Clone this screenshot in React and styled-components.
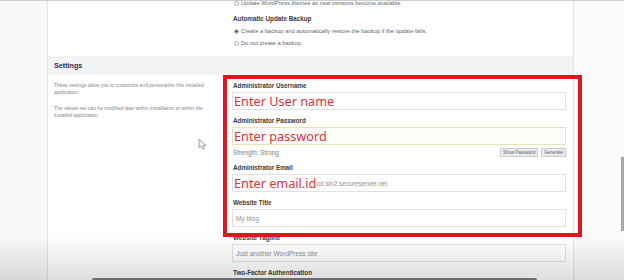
import React from 'react';
import styled, { createGlobalStyle } from 'styled-components';

const RED = '#e3141d';

const GlobalStyle = createGlobalStyle`
  html, body {
    margin: 0;
    padding: 0;
  }
  body {
    width: 624px;
    height: 280px;
    overflow: hidden;
    font-family: "Liberation Sans", Arial, sans-serif;
  }
`;

const Screen = styled.div`
  position: relative;
  width: 624px;
  height: 280px;
  box-sizing: border-box;
  border-top: 1px solid #cfcfcf;
  background: #f8f8f8;
  display: flex;
  overflow: hidden;
`;

const Panel = styled.div`
  margin-left: 47px;
  width: 527px;
  box-sizing: border-box;
  border-left: 1px solid #e4e4e4;
  border-right: 1px solid #e4e4e4;
  background: #fff;
  display: flex;
  flex-direction: column;
`;

const Gutter = styled.div`
  flex: 1;
  display: flex;
  flex-direction: column;
  align-items: flex-end;
  background: #fbfbfb;
`;

const ScrollThumb = styled.div`
  margin-top: 156px;
  width: 3px;
  height: 74px;
  background: #a9a9a9;
`;

const TopSection = styled.div`
  height: 55px;
  display: grid;
  grid-template-columns: 175px 1fr;
  overflow: hidden;
`;

const TopOptions = styled.div`
  grid-column: 2;
  padding-left: 10px;
  display: flex;
  flex-direction: column;
`;

const OptionHeading = styled.div`
  margin-top: 8px;
  font-size: 6.3px;
  line-height: 8px;
  font-weight: bold;
  color: #3a3a3a;
`;

const Option = styled.div`
  display: flex;
  align-items: center;
  gap: 2px;
  padding-left: 1px;
  height: 8px;
  margin-top: ${p => (p.first ? '-2px' : '4px')};
  font-size: 5.8px;
  color: #666;
  white-space: nowrap;
`;

const Radio = styled.span`
  width: 5px;
  height: 5px;
  box-sizing: border-box;
  border-radius: 50%;
  border: 1px solid #b0b0b0;
  background: ${p => (p.checked ? 'radial-gradient(circle, #555 0 1.2px, #fff 1.3px)' : '#fff')};
  flex-shrink: 0;
`;

const SectionBand = styled.div`
  height: 19px;
  padding-left: 6px;
  background: #f2f3f5;
  font-size: 7.2px;
  line-height: 19px;
  font-weight: bold;
  color: #2a2b55;
`;

const SectionBody = styled.div`
  flex: 1;
  display: grid;
  grid-template-columns: 175px 1fr;
`;

const Description = styled.div`
  padding: 6.5px 14px 0 6px;
`;

const DescText = styled.p`
  margin: 0 0 9px;
  font-size: 5px;
  line-height: 7px;
  color: #888;
`;

const FormColumn = styled.div`
  position: relative;
  padding: 7px 7px 0 9px;
  display: flex;
  flex-direction: column;
  gap: 7px;
`;

const Field = styled.div`
  display: flex;
  flex-direction: column;
`;

const Label = styled.div`
  padding-left: 1px;
  font-size: 6.3px;
  line-height: 8px;
  font-weight: bold;
  color: #3a3a3a;
  white-space: nowrap;
`;

const Input = styled.div`
  margin-top: 2px;
  height: 18px;
  box-sizing: border-box;
  border: 1px solid ${p => (p.focused ? '#ece3b4' : '#e1e1e1')};
  background: ${p => (p.focused ? '#fffefa' : '#fff')};
  display: flex;
  align-items: center;
  padding-left: 3px;
  font-size: 6.5px;
  color: #8f8f8f;
  white-space: nowrap;
  overflow: hidden;
`;

const RedNote = styled.span`
  margin-left: -2px;
  font-family: "Noto Sans", "Open Sans", sans-serif;
  font-size: 12.7px;
  line-height: 1;
  color: #e2303a;
`;

const StrengthRow = styled.div`
  margin-top: 3px;
  height: 9px;
  display: flex;
  align-items: center;
  justify-content: space-between;
`;

const Strength = styled.span`
  padding-left: 1px;
  font-size: 6.3px;
  color: #808080;
`;

const ButtonGroup = styled.div`
  display: flex;
  gap: 3px;
`;

const SmallButton = styled.span`
  height: 9px;
  box-sizing: border-box;
  padding: 0 2px;
  border: 1px solid #cbcbcb;
  background: #ececec;
  font-size: 4.5px;
  line-height: 7px;
  color: #606060;
`;

const Annotation = styled.div`
  position: absolute;
  top: 0;
  left: 0;
  width: 359px;
  height: 162px;
  box-sizing: border-box;
  border: 4px solid ${RED};
  pointer-events: none;
`;

const Cursor = styled.svg`
  position: absolute;
  left: 198px;
  top: 137px;
`;

const BottomShade = styled.div`
  position: absolute;
  left: 0;
  right: 0;
  bottom: 0;
  height: 44px;
  background: linear-gradient(to bottom, rgba(0, 0, 0, 0), rgba(0, 0, 0, 0.13));
  pointer-events: none;
`;

const CaptionEdge = styled.div`
  position: absolute;
  left: 92px;
  bottom: 0;
  width: 445px;
  height: 2px;
  border-radius: 2px 2px 0 0;
  background: rgba(70, 70, 70, 0.75);
`;

const fields = [
  { label: 'Administrator Username', note: 'Enter User name' },
  { label: 'Administrator Password', note: 'Enter password', focused: true, password: true },
  { label: 'Administrator Email', note: 'Enter email.id', value: 'od.sin2.secureserver.net' },
  { label: 'Website Title', value: 'My blog' },
  { label: 'Website Tagline', value: 'Just another WordPress site' },
  { label: 'Two-Factor Authentication' },
];

const App = () => (
  <>
    <GlobalStyle />
    <Screen>
      <Panel>
        <TopSection>
          <TopOptions>
            <Option first>
              <Radio />
              Update WordPress themes as new versions become available.
            </Option>
            <OptionHeading>Automatic Update Backup</OptionHeading>
            <Option>
              <Radio checked />
              Create a backup and automatically restore the backup if the update fails.
            </Option>
            <Option>
              <Radio />
              Do not create a backup.
            </Option>
          </TopOptions>
        </TopSection>

        <SectionBand>Settings</SectionBand>

        <SectionBody>
          <Description>
            <DescText>
              These settings allow you to customize and personalize this installed application.
            </DescText>
            <DescText>
              The values set can be modified later within Installatron or within the installed application.
            </DescText>
          </Description>

          <FormColumn>
            {fields.map(f => (
              <Field key={f.label}>
                <Label>{f.label}</Label>
                {(f.note || f.value) && (
                  <Input focused={f.focused}>
                    {f.note && <RedNote>{f.note}</RedNote>}
                    {f.value}
                  </Input>
                )}
                {f.password && (
                  <StrengthRow>
                    <Strength>Strength: Strong</Strength>
                    <ButtonGroup>
                      <SmallButton>Show Password</SmallButton>
                      <SmallButton>Generate</SmallButton>
                    </ButtonGroup>
                  </StrengthRow>
                )}
              </Field>
            ))}
            <Annotation />
          </FormColumn>
        </SectionBody>
      </Panel>

      <Gutter>
        <ScrollThumb />
      </Gutter>

      <Cursor width="9" height="12" viewBox="0 0 9 12">
        <path
          d="M1 1 L1 10 L3.4 7.9 L5 11.3 L6.5 10.6 L5 7.3 L8 7.3 Z"
          fill="#f4f4f4"
          stroke="#8a8a8a"
          strokeWidth="0.8"
          strokeLinejoin="round"
        />
      </Cursor>
      <BottomShade />
      <CaptionEdge />
    </Screen>
  </>
);

export default App;
